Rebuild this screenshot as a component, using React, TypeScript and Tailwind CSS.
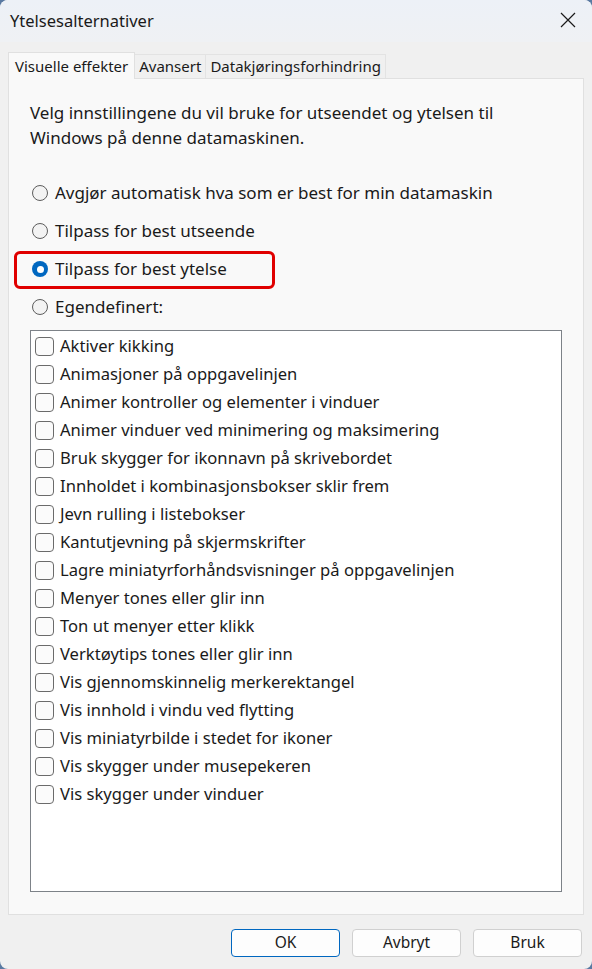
import React, { useState } from "react";

const FONT = { fontFamily: '"Segoe UI", "Noto Sans", "Open Sans", sans-serif' };

const RADIOS = [
  "Avgjør automatisk hva som er best for min datamaskin",
  "Tilpass for best utseende",
  "Tilpass for best ytelse",
  "Egendefinert:",
];

const EFFECTS = [
  "Aktiver kikking",
  "Animasjoner på oppgavelinjen",
  "Animer kontroller og elementer i vinduer",
  "Animer vinduer ved minimering og maksimering",
  "Bruk skygger for ikonnavn på skrivebordet",
  "Innholdet i kombinasjonsbokser sklir frem",
  "Jevn rulling i listebokser",
  "Kantutjevning på skjermskrifter",
  "Lagre miniatyrforhåndsvisninger på oppgavelinjen",
  "Menyer tones eller glir inn",
  "Ton ut menyer etter klikk",
  "Verktøytips tones eller glir inn",
  "Vis gjennomskinnelig merkerektangel",
  "Vis innhold i vindu ved flytting",
  "Vis miniatyrbilde i stedet for ikoner",
  "Vis skygger under musepekeren",
  "Vis skygger under vinduer",
];

function Radio({ checked }: { checked: boolean }) {
  return checked ? (
    <span className="flex h-[16px] w-[16px] shrink-0 items-center justify-center rounded-full bg-[#0067c0]">
      <span className="h-[7px] w-[7px] rounded-full bg-white" />
    </span>
  ) : (
    <span className="h-[16px] w-[16px] shrink-0 rounded-full border border-[#5d5d5d] bg-[#f3f3f3]" />
  );
}

export default function App() {
  const [choice, setChoice] = useState(2);

  return (
    <div className="h-[969px] w-[592px] bg-[#5a7aa2]" style={FONT}>
      <div className="flex h-full flex-col overflow-hidden rounded-[8px] bg-[#f0f0f0] text-[#1a1a1a]">

        {/* Title bar */}
        <div className="flex h-[42px] shrink-0 items-center justify-between bg-gradient-to-b from-[#edf1f7] to-[#eff1f4] pl-[10px] pr-[16px]">
          <span className="text-[16.5px]">Ytelsesalternativer</span>
          <svg width="16" height="16" viewBox="0 0 16 16" className="mb-[2px]">
            <path d="M1 1 L15 15 M15 1 L1 15" stroke="#1a1a1a" strokeWidth="1.2" />
          </svg>
        </div>

        {/* Tabs */}
        <div className="mt-[10px] flex h-[26px] items-end px-[8px] text-[15px]">
          <div className="relative z-10 -mb-px flex h-[27px] items-center border border-b-0 border-[#e0e0e0] bg-[#f9f9f9] px-[6px]">
            Visuelle effekter
          </div>
          <div className="flex h-[24px] items-center border border-b-0 border-l-0 border-[#e3e3e3] bg-[#f0f0f0] px-[4px]">
            Avansert
          </div>
          <div className="flex h-[24px] items-center border border-b-0 border-l-0 border-[#e3e3e3] bg-[#f0f0f0] px-[4px]">
            Datakjøringsforhindring
          </div>
        </div>

        {/* Panel */}
        <div className="mx-[8px] flex h-[837px] flex-col border border-[#e0e0e0] bg-[#f9f9f9] pb-[22px] pl-[21px] pr-[18px] pt-[21px] text-[17px]">
          <p className="leading-[25px]">
            Velg innstillingene du vil bruke for utseendet og ytelsen til
            <br />
            Windows på denne datamaskinen.
          </p>

          <div className="mt-[24px] flex flex-col">
            {RADIOS.map((label, i) => (
              <div
                key={label}
                className="relative flex h-[38px] cursor-default items-center gap-[7px] pl-[2px]"
                onClick={() => setChoice(i)}
              >
                <Radio checked={choice === i} />
                <span>{label}</span>
                {i === 2 && (
                  <div className="pointer-events-none absolute -left-[16px] top-[1px] h-[38px] w-[261px] rounded-[6px] border-[3px] border-[#e00000]" />
                )}
              </div>
            ))}
          </div>

          <div className="mr-[3px] mt-[4px] flex-1 border border-[#7d8288] bg-white pl-[4px] pt-[1px] text-[16.6px]">
            {EFFECTS.map((label) => (
              <div key={label} className="flex h-[28px] items-center gap-[6px]">
                <span className="h-[19px] w-[19px] shrink-0 rounded-[4px] border border-[#6b6b6b] bg-[#fbfbfb]" />
                <span>{label}</span>
              </div>
            ))}
          </div>
        </div>

        {/* Buttons */}
        <div className="flex justify-end gap-[12px] pr-[10px] pt-[14px] text-[15.5px]">
          <button className="h-[28px] w-[109px] rounded-[4px] border border-[#0067c0] bg-[#fdfdfd]">OK</button>
          <button className="h-[28px] w-[109px] rounded-[4px] border border-[#d0d0d0] bg-[#fdfdfd]">Avbryt</button>
          <button className="h-[28px] w-[109px] rounded-[4px] border border-[#d0d0d0] bg-[#fdfdfd]">Bruk</button>
        </div>
      </div>
    </div>
  );
}
